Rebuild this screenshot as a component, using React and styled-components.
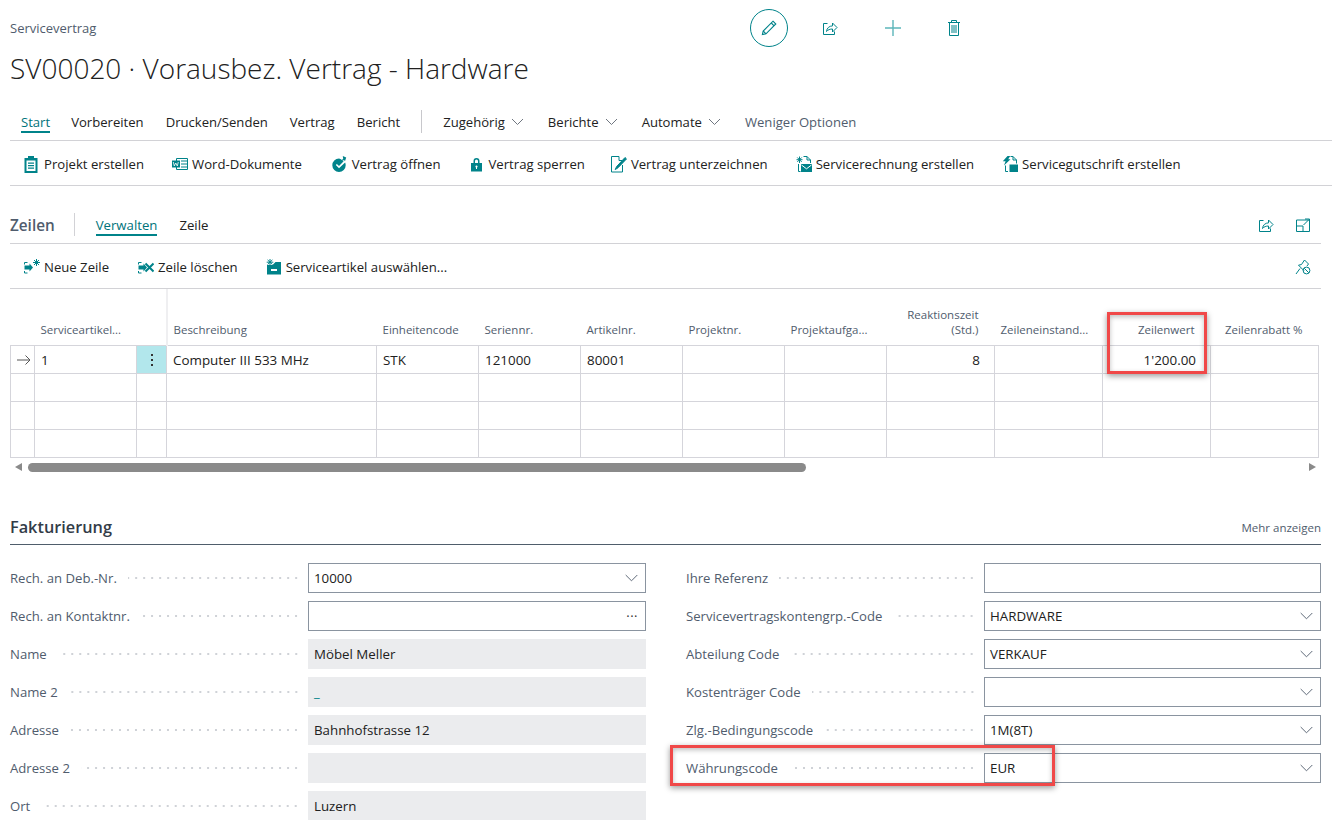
import React from "react";
import styled, { createGlobalStyle } from "styled-components";

const TEAL = "#00838a";
const FONT = `"Open Sans", "Noto Sans", "Liberation Sans", sans-serif`;

const GlobalStyle = createGlobalStyle`
  html, body {
    margin: 0;
    height: 820px;
    overflow: hidden;
    background: #fff;
    font-family: ${FONT};
    color: #212121;
  }
  * { box-sizing: border-box; }
`;

const Page = styled.div`
  position: relative;
  width: 1332px;
  height: 820px;
  overflow: hidden;
  padding-left: 10px;
`;

const Header = styled.header`
  display: flex;
  height: 105px;
`;

const TitleBlock = styled.div`
  width: 740px;
  padding-top: 20px;
`;

const Caption = styled.div`
  font-size: 13px;
  line-height: 17px;
  color: #505c6d;
`;

const Title = styled.h1`
  margin: 11px 0 0;
  font-size: 28px;
  line-height: 40px;
  font-weight: 300;
  color: #212121;
  white-space: nowrap;
`;

const HeaderActions = styled.div`
  display: flex;
  align-items: center;
  height: 38px;
  margin-top: 9px;
`;

const EditButton = styled.div`
  width: 38px;
  height: 38px;
  border: 1px solid ${TEAL};
  border-radius: 50%;
  display: flex;
  align-items: center;
  justify-content: center;
  margin-right: 33px;
`;

const HeaderIcon = styled.div`
  width: 18px;
  display: flex;
  justify-content: center;
  margin-right: ${(p) => p.$gap}px;
`;

const TabBar = styled.nav`
  display: flex;
  align-items: center;
  height: 36px;
  padding: 0 0 2px 11px;
  border-bottom: 1px solid #d2d2d6;
  font-size: 13.1px;
`;

const Tab = styled.div`
  position: relative;
  margin-right: ${(p) => p.$gap ?? 22}px;
  line-height: 18px;
  white-space: nowrap;
  display: flex;
  align-items: center;
  gap: 6px;
  color: ${(p) => (p.$active ? "#00737a" : p.$muted ? "#505c6d" : "#212121")};
  ${(p) =>
    p.$active &&
    `&::after {
      content: "";
      position: absolute;
      left: 0;
      right: 0;
      bottom: -2px;
      height: 2px;
      background: ${TEAL};
    }`}
`;

const TabDivider = styled.div`
  width: 1px;
  height: 23px;
  background: #c8c8cc;
  margin-right: 21px;
`;

const ActionBar = styled.div`
  display: flex;
  align-items: center;
  gap: 28px;
  height: ${(p) => p.$height}px;
  padding: 2px 0 0 14px;
  border-bottom: 1px solid #d2d2d6;
  font-size: 13.15px;
  margin-right: ${(p) => p.$inset || 0}px;
`;

const Action = styled.div`
  display: flex;
  align-items: center;
  gap: 4px;
  white-space: nowrap;
  color: #212121;
  margin-right: ${(p) => p.$nudge || 0}px;
`;

const PinSlot = styled.div`
  margin-left: auto;
  margin-right: 10px;
  display: flex;
`;

const SectionHead = styled.div`
  display: flex;
  align-items: center;
  height: 40px;
  margin-top: 18px;
  margin-right: 11px;
  padding-top: 2px;
  border-bottom: 1px solid #d2d2d6;
  font-size: 13.2px;
`;

const SectionName = styled.div`
  font-size: 15.3px;
  font-weight: 600;
  color: #505c6d;
  padding-right: 19px;
  margin-right: 21px;
  height: 23px;
  line-height: 24px;
  border-right: 1px solid #d2d2d6;
`;

const SubTab = styled.div`
  position: relative;
  margin-right: 22px;
  line-height: 18px;
  color: ${(p) => (p.$active ? "#00737a" : "#212121")};
  ${(p) =>
    p.$active &&
    `&::after {
      content: "";
      position: absolute;
      left: 0;
      right: 0;
      bottom: -2px;
      height: 2px;
      background: ${TEAL};
    }`}
`;

const HeadTools = styled.div`
  margin-left: auto;
  display: flex;
  gap: 21px;
  padding-right: 10px;
`;

const Table = styled.table`
  table-layout: fixed;
  width: 1309px;
  border-collapse: collapse;
  font-size: 13.4px;
`;

const Th = styled.th`
  height: 56px;
  font-weight: 400;
  font-size: 11.5px;
  line-height: 15px;
  color: #505c6d;
  vertical-align: bottom;
  text-align: ${(p) => (p.$right ? "right" : "left")};
  padding: 0 ${(p) => (p.$right ? "16px" : "0")} 8px ${(p) => (p.$right ? "0" : "6px")};
  white-space: pre-line;
  overflow: hidden;
  ${(p) => p.$sticky && "border-right: 2px solid #efeff1;"}
`;

const Td = styled.td`
  height: 28px;
  padding: 2px ${(p) => (p.$right ? "14px" : "0")} 0 ${(p) => (p.$right ? "0" : "6px")};
  border: 1px solid #d5d5db;
  text-align: ${(p) => (p.$right ? "right" : "left")};
  white-space: nowrap;
  color: #212121;
  background: ${(p) => (p.$menu ? "#b2e7ec" : "transparent")};
`;

const MenuDots = styled.div`
  display: flex;
  flex-direction: column;
  align-items: center;
  gap: 3px;
  margin: 0 0 0 -6px;
  & > i {
    width: 2px;
    height: 2px;
    background: #333;
    display: block;
  }
`;

const ScrollBar = styled.div`
  display: flex;
  align-items: center;
  height: 9px;
  margin-top: 5px;
  width: 1308px;
  padding-left: 4px;
`;

const ScrollThumb = styled.div`
  width: 778px;
  height: 9px;
  border-radius: 5px;
  background: #8a8a8a;
  margin-left: 6px;
`;

const ArrowLeft = styled.div`
  width: 0;
  height: 0;
  border-top: 4px solid transparent;
  border-bottom: 4px solid transparent;
  border-right: 7px solid #8a8a8a;
  margin-left: 1px;
`;

const ArrowRight = styled.div`
  width: 0;
  height: 0;
  border-top: 4px solid transparent;
  border-bottom: 4px solid transparent;
  border-left: 7px solid #8a8a8a;
  margin-left: auto;
  margin-right: 2px;
`;

const FormHead = styled.div`
  display: flex;
  align-items: center;
  justify-content: space-between;
  height: 34px;
  margin-top: 39px;
  margin-right: 11px;
  border-bottom: 1px solid #4f5d6b;
`;

const FormTitle = styled.h2`
  margin: 0;
  font-size: 16.3px;
  font-weight: 600;
  color: #333c48;
`;

const MoreLink = styled.div`
  font-size: 11.5px;
  color: #505c6d;
`;

const FormGrid = styled.div`
  display: grid;
  grid-template-columns: 636px 635px;
  column-gap: 40px;
  margin-top: 18px;
`;

const FormColumn = styled.div`
  display: flex;
  flex-direction: column;
  gap: 8px;
`;

const Field = styled.div`
  display: grid;
  grid-template-columns: ${(p) => p.$labelWidth}px 1fr;
  align-items: center;
  height: 30px;
`;

const LabelWrap = styled.div`
  display: flex;
  align-items: center;
  gap: 11px;
  padding-right: 8px;
  font-size: 13.15px;
  color: #505c6d;
  white-space: nowrap;
`;

const Leader = styled.span`
  flex: 1;
  height: 2px;
  background-image: radial-gradient(circle, #cfd2d7 0.9px, transparent 1px);
  background-size: 8px 2px;
  background-position: right center;
`;

const InputBox = styled.div`
  height: 30px;
  display: flex;
  align-items: center;
  justify-content: space-between;
  padding: 0 7px 0 5px;
  font-size: 13.3px;
  border: 1px solid ${(p) => (p.$readOnly ? "#ebecee" : "#8a94a0")};
  background: ${(p) => (p.$readOnly ? "#ebecee" : "#fff")};
  color: ${(p) => (p.$link ? TEAL : "#212121")};
  font-weight: ${(p) => (p.$link ? 600 : 400)};
`;

const Ellipsis = styled.span`
  font-size: 13px;
  letter-spacing: 0.5px;
  color: #333;
`;

const Highlight = styled.div`
  position: absolute;
  left: ${(p) => p.$x}px;
  top: ${(p) => p.$y}px;
  width: ${(p) => p.$w}px;
  height: ${(p) => p.$h}px;
  border: 3px solid #f04848;
  box-shadow: 0 2px 6px rgba(0, 0, 0, 0.4), inset 0 2px 5px rgba(0, 0, 0, 0.25);
  pointer-events: none;
`;

const Svg = ({ size = 16, w, h, children, ...rest }) => (
  <svg width={w || size} height={h || size} viewBox={`0 0 ${w || size} ${h || size}`} fill="none" stroke={TEAL} strokeWidth="1" style={{ display: "block", flex: "none" }} {...rest}>
    {children}
  </svg>
);

const Chevron = () => (
  <Svg w={13} h={8} stroke="#6f7680">
    <path d="M1 1l5.5 5.5L12 1" />
  </Svg>
);

const BigChevron = () => (
  <Svg w={13} h={8} stroke="#5f6a78">
    <path d="M.7 1l5.8 5.8L12.3 1" />
  </Svg>
);

const PencilIcon = () => (
  <Svg size={18} strokeWidth="1.1">
    <path d="M13 2.2l2.8 2.8L6 14.8l-3.6.8.8-3.6z" />
    <path d="M11.3 4l2.8 2.8M3.2 12l2.8 2.8" />
  </Svg>
);

const ShareIcon = () => (
  <Svg size={16}>
    <path d="M5.5 3.5H1.5v11h11v-3" />
    <path d="M4.5 11.5c.3-3.6 3-5.6 6-5.6V3l4.5 4.5-4.5 4.5V9c-2.5 0-4.6.8-6 2.5z" />
  </Svg>
);

const PlusIcon = () => (
  <Svg size={18} stroke="#5cb6ba" strokeWidth="1.4">
    <path d="M9 1v16M1 9h16" />
  </Svg>
);

const TrashIcon = () => (
  <Svg w={14} h={18}>
    <path d="M1 3.5h12M4.5 3.5V1.5h5v2M2.5 3.5v13h9v-13" />
    <path d="M5 6v8M7 6v8M9 6v8" />
  </Svg>
);

const ExpandIcon = () => (
  <Svg size={16}>
    <path d="M1.5 3V14.5H14.5V3Z" />
    <path d="M1.5 9H8V14.5M8.5 8l5.5-5.5M10 2h4.5v4.5" />
  </Svg>
);

const PinOffIcon = () => (
  <Svg size={16}>
    <path d="M9.5 1l-3 4.5-3 .7 5.6 5.6" />
    <path d="M9.5 1l4 4-1.5 2" />
    <path d="M5 9.5L1 15" />
    <circle cx="11.5" cy="11.5" r="3.4" />
    <path d="M9.2 9.2l4.6 4.6" />
  </Svg>
);

const ClipboardIcon = () => (
  <Svg w={16} h={17} stroke="none" fill={TEAL}>
    <path fillRule="evenodd" d="M4 0h6v2h3.5v15H.5V2H4zM2.5 4.5v10.5h9V4.5zM4 6.5h6v1.2H4zM4 9h6v1.2H4zM4 11.5h6v1.2H4z" />
  </Svg>
);

const WordIcon = () => (
  <Svg size={16}>
    <path d="M4.5 2.5h11v11h-11z" />
    <path d="M9 5h6M9 8h6M9 11h6" />
    <path fill={TEAL} stroke="none" d="M0 4.5h8v7H0z" />
    <path stroke="#fff" strokeWidth=".8" d="M1.3 6l1 4 1.5-3 1.5 3 1-4" />
  </Svg>
);

const OpenIcon = () => (
  <Svg size={16} stroke="none" fill={TEAL}>
    <path d="M7 2.5a6.7 6.7 0 1 0 6.7 6.7c0-1-.2-1.9-.6-2.7L7 12.2 3.8 9l1.1-1.1L7 10l4.7-4.8L10.4 5l-.8-1.2A6.6 6.6 0 0 0 7 2.5z" />
    <path d="M10.8 0l3.4 1.6-1.2 3.6-1-1.3-1.8 1-.6-.9 1.6-1.1z" />
  </Svg>
);

const LockIcon = () => (
  <Svg w={15} h={15} stroke="none" fill={TEAL}>
    <path fillRule="evenodd" d="M3.5 6V4a3 3 0 0 1 6 0v2H12v8.5H1V6zM5 6h3V4a1.5 1.5 0 0 0-3 0zM6.5 8.5a1 1 0 0 0-.5 1.9V12h1v-1.6a1 1 0 0 0-.5-1.9z" />
  </Svg>
);

const SignIcon = () => (
  <Svg size={17}>
    <path d="M9 .5H1.5v15.5h11V9" />
    <path d="M9 .5v4h3" />
    <path fill={TEAL} d="M15 1.5l1.5 1.4L8 11.8l-2.8 1.8 1.4-3z" />
  </Svg>
);

const InvoiceIcon = () => (
  <Svg size={16}>
    <path d="M7.5 .5h3.5l3.5 3.5v3M2.5 8v7.5H4.5" />
    <path d="M11 .5v3.5h3.5" />
    <path fill={TEAL} stroke="none" d="M5 8h11v8H5z" />
    <path stroke="#fff" d="M5.5 9l5 3.8 5-3.8" />
    <path d="M3.5 .5v6.5M.5 3.7h6M1.3 1.5l4.4 4.4M5.7 1.5L1.3 5.9" />
  </Svg>
);

const CreditIcon = () => (
  <Svg size={16}>
    <path d="M8.5 .5h2.5l3.5 3.5v3.5M3.5 9.5v6H6" />
    <path d="M11 .5v3.5h3.5" />
    <path fill={TEAL} stroke="none" d="M7.5 8.5h8.5V16H7.5z" />
    <path fill={TEAL} stroke="none" d="M5.5 0h2.7L6.2 3.2h2.3L2 9.4l1.6-4.2H.8z" />
  </Svg>
);

const LineIcon = ({ remove }) => (
  <Svg size={16}>
    <path d="M.5 5.5V3.5h3M.5 12V14h3" />
    <path fill={TEAL} stroke="none" d="M.5 6.5h5V4.5l3.5 4-3.5 4v-2h-5z" />
    {remove ? (
      <path strokeWidth="2" d="M7.5 4.5l8 8M15.5 4.5l-8 8" />
    ) : (
      <path d="M12.5 0v7M9 3.5h7M10 1l5 5M15 1l-5 5" />
    )}
  </Svg>
);

const ItemPickIcon = () => (
  <Svg size={16}>
    <path fill={TEAL} stroke="none" fillRule="evenodd" d="M1 6h5.5l3-3H15v12.5H1zM5 10v2h6v-2z" />
    <path d="M4 0v6.5M.7 3.2h6.6M1.6 .9l4.8 4.6M6.4 .9L1.6 5.5" />
  </Svg>
);

const RowArrow = () => (
  <Svg w={14} h={10} stroke="#555">
    <path d="M0 5h13M8.5 .5L13 5l-4.5 4.5" />
  </Svg>
);

const tabs = [
  { label: "Start", active: true, gap: 21 },
  { label: "Vorbereiten" },
  { label: "Drucken/Senden" },
  { label: "Vertrag" },
  { label: "Bericht", gap: 21 },
];
const menuTabs = ["Zugehörig", "Berichte", "Automate"];

const mainActions = [
  { label: "Projekt erstellen", icon: <ClipboardIcon /> },
  { label: "Word-Dokumente", icon: <WordIcon />, nudge: 2 },
  { label: "Vertrag öffnen", icon: <OpenIcon />, nudge: 1 },
  { label: "Vertrag sperren", icon: <LockIcon />, nudge: -3 },
  { label: "Vertrag unterzeichnen", icon: <SignIcon /> },
  { label: "Servicerechnung erstellen", icon: <InvoiceIcon /> },
  { label: "Servicegutschrift erstellen", icon: <CreditIcon /> },
];

const lineActions = [
  { label: "Neue Zeile", icon: <LineIcon />, nudge: 1 },
  { label: "Zeile löschen", icon: <LineIcon remove /> },
  { label: "Serviceartikel auswählen...", icon: <ItemPickIcon /> },
];

const columns = [
  { w: 24, label: "" },
  { w: 102, label: "Serviceartikel..." },
  { w: 30, label: "", sticky: true },
  { w: 210, label: "Beschreibung" },
  { w: 102, label: "Einheitencode" },
  { w: 102, label: "Seriennr." },
  { w: 102, label: "Artikelnr." },
  { w: 102, label: "Projektnr." },
  { w: 102, label: "Projektaufga..." },
  { w: 108, label: "Reaktionszeit\n(Std.)", right: true },
  { w: 108, label: "Zeileneinstand..." },
  { w: 108, label: "Zeilenwert", right: true },
  { w: 108, label: "Zeilenrabatt %", right: true },
];

const firstRow = ["1", "", "Computer III 533 MHz", "STK", "121000", "80001", "", "", "8", "", "1'200.00", ""];

const leftFields = [
  { label: "Rech. an Deb.-Nr.", value: "10000", chevron: true },
  { label: "Rech. an Kontaktnr.", value: "", dots: true },
  { label: "Name", value: "Möbel Meller", readOnly: true },
  { label: "Name 2", value: "_", readOnly: true, link: true },
  { label: "Adresse", value: "Bahnhofstrasse 12", readOnly: true },
  { label: "Adresse 2", value: "", readOnly: true },
  { label: "Ort", value: "Luzern", readOnly: true },
];

const rightFields = [
  { label: "Ihre Referenz", value: "" },
  { label: "Servicevertragskontengrp.-Code", value: "HARDWARE", chevron: true },
  { label: "Abteilung Code", value: "VERKAUF", chevron: true },
  { label: "Kostenträger Code", value: "", chevron: true },
  { label: "Zlg.-Bedingungscode", value: "1M(8T)", chevron: true },
  { label: "Währungscode", value: "EUR", chevron: true },
];

const FormField = ({ field, labelWidth }) => (
  <Field $labelWidth={labelWidth}>
    <LabelWrap>
      {field.label}
      <Leader />
    </LabelWrap>
    <InputBox $readOnly={field.readOnly} $link={field.link}>
      <span>{field.value}</span>
      {field.chevron && <BigChevron />}
      {field.dots && <Ellipsis>···</Ellipsis>}
    </InputBox>
  </Field>
);

const App = () => {
  return (
    <Page>
      <GlobalStyle />
      <Header>
        <TitleBlock>
          <Caption>Servicevertrag</Caption>
          <Title>SV00020 · Vorausbez. Vertrag - Hardware</Title>
        </TitleBlock>
        <HeaderActions>
          <EditButton>
            <PencilIcon />
          </EditButton>
          <HeaderIcon $gap={45}>
            <ShareIcon />
          </HeaderIcon>
          <HeaderIcon $gap={43}>
            <PlusIcon />
          </HeaderIcon>
          <HeaderIcon $gap={0}>
            <TrashIcon />
          </HeaderIcon>
        </HeaderActions>
      </Header>

      <TabBar>
        {tabs.map((t) => (
          <Tab key={t.label} $active={t.active} $gap={t.gap}>
            {t.label}
          </Tab>
        ))}
        <TabDivider />
        {menuTabs.map((t) => (
          <Tab key={t} $gap={24}>
            {t}
            <Chevron />
          </Tab>
        ))}
        <Tab $muted>Weniger Optionen</Tab>
      </TabBar>

      <ActionBar $height={45}>
        {mainActions.map((a) => (
          <Action key={a.label} $nudge={a.nudge}>
            {a.icon}
            {a.label}
          </Action>
        ))}
      </ActionBar>

      <SectionHead>
        <SectionName>Zeilen</SectionName>
        <SubTab $active>Verwalten</SubTab>
        <SubTab>Zeile</SubTab>
        <HeadTools>
          <ShareIcon />
          <ExpandIcon />
        </HeadTools>
      </SectionHead>

      <ActionBar $height={45} $inset={11}>
        {lineActions.map((a) => (
          <Action key={a.label} $nudge={a.nudge}>
            {a.icon}
            {a.label}
          </Action>
        ))}
        <PinSlot>
          <PinOffIcon />
        </PinSlot>
      </ActionBar>

      <Table>
        <colgroup>
          {columns.map((c, i) => (
            <col key={i} style={{ width: c.w }} />
          ))}
        </colgroup>
        <thead>
          <tr>
            {columns.map((c, i) => (
              <Th key={i} $right={c.right} $sticky={c.sticky}>
                {c.label}
              </Th>
            ))}
          </tr>
        </thead>
        <tbody>
          <tr>
            <Td>
              <RowArrow />
            </Td>
            {firstRow.map((v, i) => (
              <Td key={i} $right={columns[i + 1].right} $menu={i === 1}>
                {i === 1 ? (
                  <MenuDots>
                    <i />
                    <i />
                    <i />
                  </MenuDots>
                ) : (
                  v
                )}
              </Td>
            ))}
          </tr>
          {[0, 1, 2].map((r) => (
            <tr key={r}>
              {columns.map((c, i) => (
                <Td key={i} />
              ))}
            </tr>
          ))}
        </tbody>
      </Table>

      <ScrollBar>
        <ArrowLeft />
        <ScrollThumb />
        <ArrowRight />
      </ScrollBar>

      <FormHead>
        <FormTitle>Fakturierung</FormTitle>
        <MoreLink>Mehr anzeigen</MoreLink>
      </FormHead>

      <FormGrid>
        <FormColumn>
          {leftFields.map((f) => (
            <FormField key={f.label} field={f} labelWidth={298} />
          ))}
        </FormColumn>
        <FormColumn>
          {rightFields.map((f) => (
            <FormField key={f.label} field={f} labelWidth={298} />
          ))}
        </FormColumn>
      </FormGrid>

      <Highlight $x={1107} $y={312} $w={100} $h={62} />
      <Highlight $x={670} $y={745} $w={385} $h={41} />
    </Page>
  );
};

export default App;
